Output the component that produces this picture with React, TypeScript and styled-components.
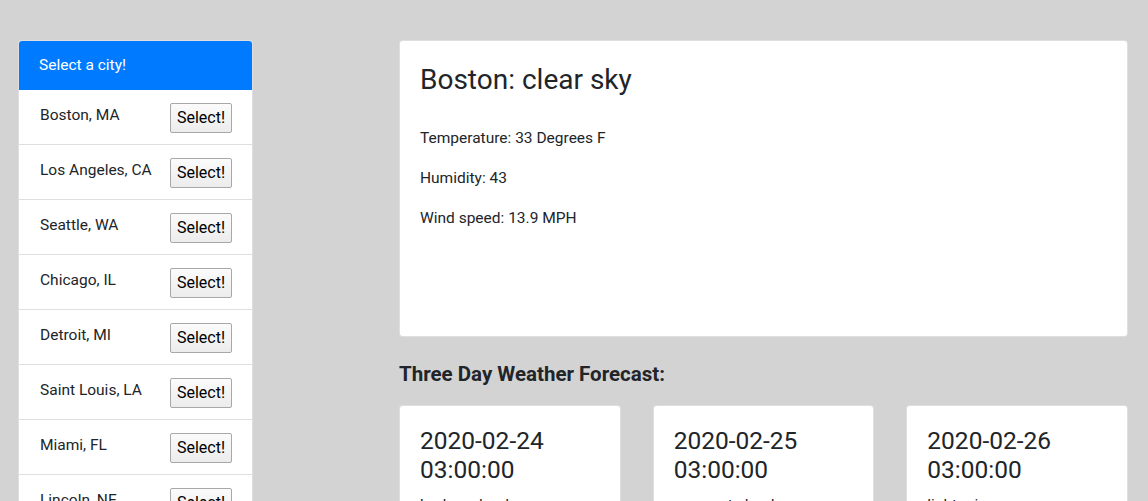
import styled, { createGlobalStyle } from "styled-components";

const GlobalStyle = createGlobalStyle`
  html, body {
    margin: 0;
    padding: 0;
    overflow: hidden;
  }
  body {
    background-color: #d3d3d3;
    font-family: "Segoe UI", Roboto, "Noto Sans", sans-serif;
    font-size: 16px;
    line-height: 1.5;
    color: #212529;
  }
  * {
    box-sizing: border-box;
  }
`;

const Page = styled.div`
  display: grid;
  grid-template-columns: 235px 1fr;
  column-gap: 146px;
  padding: 40px 20px 0 18px;
  align-items: start;
`;

const CityCard = styled.div`
  background-color: #fff;
  border: 1px solid rgba(0, 0, 0, 0.125);
  border-radius: 4px;
  overflow: hidden;
`;

const CityHeader = styled.div`
  background-color: #007bff;
  color: #fff;
  padding: 14px 21px 11px;
  height: 50px;
  margin: -1px -1px 0;
  font-size: 15.5px;
`;

const CityRow = styled.div`
  display: flex;
  justify-content: space-between;
  align-items: flex-start;
  padding: 13px 20px 11px 21px;
  border-bottom: 1px solid rgba(0, 0, 0, 0.125);
  height: 55px;
`;

const CityName = styled.span`
  line-height: 24px;
  font-size: 15.5px;
`;

const SelectButton = styled.button`
  font-family: "Segoe UI", Roboto, "Noto Sans", sans-serif;
  font-size: 16px;
  line-height: 20px;
  color: #000;
  height: 30px;
  width: 62px;
  padding: 0 5px;
  margin-top: 0;
  border: 1px solid #a8a8a8;
  border-radius: 2px;
  background: linear-gradient(#fbfbfb, #ececec);
`;

const Main = styled.div`
  display: flex;
  flex-direction: column;
`;

const CurrentCard = styled.div`
  background-color: #fff;
  border: 1px solid rgba(0, 0, 0, 0.125);
  border-radius: 4px;
  height: 297px;
  padding: 22px 20px 20px;
`;

const CurrentTitle = styled.h3`
  margin: 0 0 29px;
  font-size: 28px;
  font-weight: 400;
  line-height: 1.2;
`;

const Stat = styled.p`
  margin: 0 0 16px;
  font-size: 15.5px;
  line-height: 24px;
`;

const ForecastHeading = styled.h5`
  margin: 25px 0 19px;
  font-size: 20.5px;
  font-weight: 700;
  line-height: 24px;
`;

const ForecastRow = styled.div`
  display: grid;
  grid-template-columns: repeat(3, 1fr);
  column-gap: 32px;
`;

const ForecastCard = styled.div`
  background-color: #fff;
  border: 1px solid rgba(0, 0, 0, 0.125);
  border-radius: 4px;
  padding: 21px 20px 20px;
  min-height: 200px;
`;

const ForecastDate = styled.h4`
  margin: 0 0 8px;
  font-size: 24.5px;
  font-weight: 400;
  line-height: 28.8px;
`;

const ForecastText = styled.p`
  margin: 0 0 16px;
  font-size: 15.5px;
  line-height: 24px;
`;

const cities = [
  "Boston, MA",
  "Los Angeles, CA",
  "Seattle, WA",
  "Chicago, IL",
  "Detroit, MI",
  "Saint Louis, LA",
  "Miami, FL",
  "Lincoln, NE",
];

const forecast = [
  { date: "2020-02-24 03:00:00", desc: "broken clouds" },
  { date: "2020-02-25 03:00:00", desc: "overcast clouds" },
  { date: "2020-02-26 03:00:00", desc: "light rain" },
];

export default function App() {
  return (
    <>
      <GlobalStyle />
      <Page>
        <CityCard>
          <CityHeader>Select a city!</CityHeader>
          {cities.map((c) => (
            <CityRow key={c}>
              <CityName>{c}</CityName>
              <SelectButton>Select!</SelectButton>
            </CityRow>
          ))}
        </CityCard>
        <Main>
          <CurrentCard>
            <CurrentTitle>Boston: clear sky</CurrentTitle>
            <Stat>Temperature: 33 Degrees F</Stat>
            <Stat>Humidity: 43</Stat>
            <Stat>Wind speed: 13.9 MPH</Stat>
          </CurrentCard>
          <ForecastHeading>Three Day Weather Forecast:</ForecastHeading>
          <ForecastRow>
            {forecast.map((f) => (
              <ForecastCard key={f.date}>
                <ForecastDate>{f.date}</ForecastDate>
                <ForecastText>{f.desc}</ForecastText>
              </ForecastCard>
            ))}
          </ForecastRow>
        </Main>
      </Page>
    </>
  );
}
